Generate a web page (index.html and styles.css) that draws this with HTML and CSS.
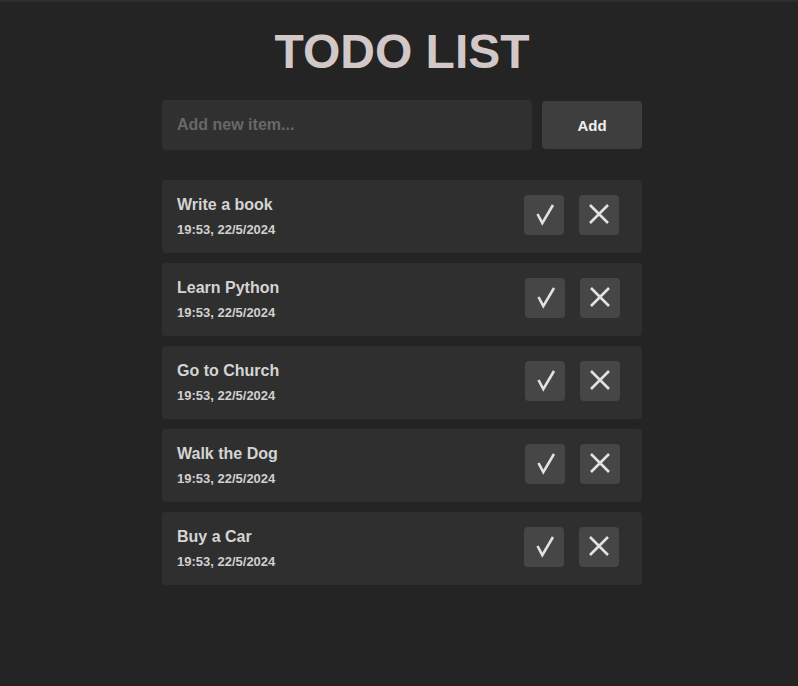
FILE: index.html
```html
<!DOCTYPE html>
<html lang="en">
<head>
<meta charset="utf-8">
<title>Todo List</title>
<link rel="stylesheet" href="styles.css">
</head>
<body>
<main class="app">
  <h1 class="title">TODO LIST</h1>
  <form class="add-form">
    <input class="add-input" type="text" placeholder="Add new item...">
    <button class="add-btn" type="button">Add</button>
  </form>
  <ul class="list">
    <li class="item">
      <div class="item-text"><div class="item-name">Write a book</div><div class="item-date">19:53, 22/5/2024</div></div>
      <div class="item-actions">
        <button class="icon-btn" type="button"><svg viewBox="0 0 40 40" width="40" height="40"><path d="M13.5 28.5 L18.3 37.6 L29 19.5" transform="translate(0,-9.5)" class="ic"/></svg></button>
        <button class="icon-btn" type="button"><svg viewBox="0 0 40 40" width="40" height="40"><path d="M11 10 L29 28 M29 10 L11 28" class="ic"/></svg></button>
      </div>
    </li>
    <li class="item">
      <div class="item-text"><div class="item-name">Learn Python</div><div class="item-date">19:53, 22/5/2024</div></div>
      <div class="item-actions shift">
        <button class="icon-btn" type="button"><svg viewBox="0 0 40 40" width="40" height="40"><path d="M13.5 28.5 L18.3 37.6 L29 19.5" transform="translate(0,-9.5)" class="ic"/></svg></button>
        <button class="icon-btn" type="button"><svg viewBox="0 0 40 40" width="40" height="40"><path d="M11 10 L29 28 M29 10 L11 28" class="ic"/></svg></button>
      </div>
    </li>
    <li class="item">
      <div class="item-text"><div class="item-name">Go to Church</div><div class="item-date">19:53, 22/5/2024</div></div>
      <div class="item-actions shift">
        <button class="icon-btn" type="button"><svg viewBox="0 0 40 40" width="40" height="40"><path d="M13.5 28.5 L18.3 37.6 L29 19.5" transform="translate(0,-9.5)" class="ic"/></svg></button>
        <button class="icon-btn" type="button"><svg viewBox="0 0 40 40" width="40" height="40"><path d="M11 10 L29 28 M29 10 L11 28" class="ic"/></svg></button>
      </div>
    </li>
    <li class="item">
      <div class="item-text"><div class="item-name">Walk the Dog</div><div class="item-date">19:53, 22/5/2024</div></div>
      <div class="item-actions shift">
        <button class="icon-btn" type="button"><svg viewBox="0 0 40 40" width="40" height="40"><path d="M13.5 28.5 L18.3 37.6 L29 19.5" transform="translate(0,-9.5)" class="ic"/></svg></button>
        <button class="icon-btn" type="button"><svg viewBox="0 0 40 40" width="40" height="40"><path d="M11 10 L29 28 M29 10 L11 28" class="ic"/></svg></button>
      </div>
    </li>
    <li class="item">
      <div class="item-text"><div class="item-name">Buy a Car</div><div class="item-date">19:53, 22/5/2024</div></div>
      <div class="item-actions">
        <button class="icon-btn" type="button"><svg viewBox="0 0 40 40" width="40" height="40"><path d="M13.5 28.5 L18.3 37.6 L29 19.5" transform="translate(0,-9.5)" class="ic"/></svg></button>
        <button class="icon-btn" type="button"><svg viewBox="0 0 40 40" width="40" height="40"><path d="M11 10 L29 28 M29 10 L11 28" class="ic"/></svg></button>
      </div>
    </li>
  </ul>
</main>
</body>
</html>
```
FILE: styles.css
```css
html {
  background: #242424;
  border-top: 2px solid #2e2e2e;
}
body {
  margin: 0;
  padding: 0 0 0 6px;
  font-family: "Liberation Sans", Arial, sans-serif;
  color: #d2d2d2;
}
.app {
  width: 480px;
  margin: 0 auto;
}
.title {
  margin: 22px 0 20px;
  font-size: 48px;
  line-height: 56px;
  font-weight: 700;
  text-align: center;
  color: #d3c8c8;
}
.add-form {
  display: flex;
  align-items: center;
  gap: 10px;
  margin: 0;
}
.add-input {
  width: 370px;
  height: 50px;
  box-sizing: border-box;
  border: none;
  border-radius: 4px;
  background: #303030;
  padding: 0 15px;
  font-family: inherit;
  font-size: 16px;
  font-weight: 700;
  color: #ddd;
  outline: none;
}
.add-input::placeholder {
  color: #686868;
}
.add-btn {
  width: 100px;
  height: 48px;
  border: none;
  border-radius: 4px;
  background: #3e3e3e;
  color: #f0f0f0;
  font-family: inherit;
  font-size: 15px;
  font-weight: 700;
}
.list {
  list-style: none;
  margin: 30px 0 0;
  padding: 0;
  display: flex;
  flex-direction: column;
  gap: 10px;
}
.item {
  display: flex;
  justify-content: space-between;
  align-items: flex-start;
  background: #2f2f2f;
  border-radius: 4px;
  padding: 15px 23px 15px 15px;
}
.item-name {
  font-size: 16px;
  line-height: 20px;
  font-weight: 700;
  color: #d4d4d4;
}
.item-date {
  margin-top: 7px;
  font-size: 13px;
  line-height: 16px;
  font-weight: 700;
  color: #d0d0d0;
}
.item-actions {
  display: flex;
  gap: 15px;
}
.item-actions.shift {
  margin-right: -1px;
}
.icon-btn {
  width: 40px;
  height: 40px;
  padding: 0;
  border: none;
  border-radius: 4px;
  background: #464646;
  display: block;
}
.icon-btn svg {
  display: block;
}
.ic {
  fill: none;
  stroke: #e2e2e2;
  stroke-width: 2.6;
  stroke-linecap: butt;
  stroke-linejoin: miter;
}
```
